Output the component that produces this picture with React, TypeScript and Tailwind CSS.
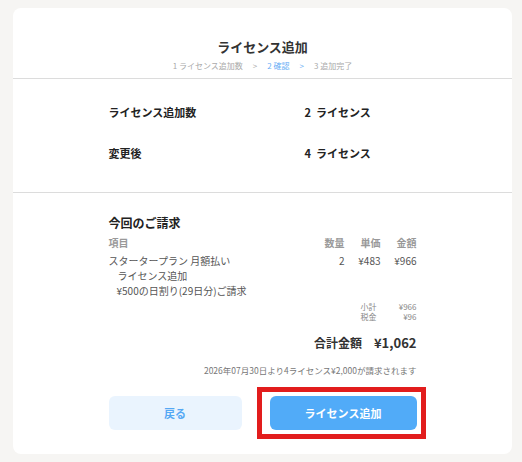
const font = { fontFamily: '"Noto Sans CJK JP", "Noto Sans", sans-serif' };

const lineItems = [
  { label: "スタータープラン 月額払い", qty: "2", unit: "¥483", amount: "¥966" },
];

export default function App() {
  return (
    <div className="min-h-[462px] w-[522px] bg-[#f6f5f3] pt-[8px] pb-[8px] pl-[13px] pr-[10px]" style={font}>
      <div className="rounded-[8px] bg-white pb-[24px]">
        {/* Header */}
        <div className="flex flex-col items-center pt-[30px] pb-[6px] border-b border-[#dcdcdc]">
          <h1 className="text-[13px] leading-[18px] font-bold text-[#333]">ライセンス追加</h1>
          <div className="mt-[4px] flex items-center text-[8px] leading-[12px] text-[#aaa]">
            <span>1 ライセンス追加数</span>
            <span className="mx-[10px]">&gt;</span>
            <span className="text-[#6aaef5]">2 確認</span>
            <span className="mx-[10px] text-[#6aaef5]">&gt;</span>
            <span>3 追加完了</span>
          </div>
        </div>

        {/* Summary */}
        <div className="border-b border-[#dcdcdc] pt-[25px] pb-[31px]">
          <div className="mx-auto w-[308px] grid grid-cols-[196px_1fr] gap-y-[25px] text-[11px] leading-[16px] font-bold text-[#222]">
            <div>ライセンス追加数</div>
            <div>2&nbsp;&nbsp;ライセンス</div>
            <div>変更後</div>
            <div>4&nbsp;&nbsp;ライセンス</div>
          </div>
        </div>

        {/* Billing */}
        <div className="mx-auto w-[308px] pt-[22px]">
          <h2 className="text-[12px] leading-[16px] font-bold text-[#222]">今回のご請求</h2>
          <div className="mt-[5px] flex text-[10px] leading-[14px] font-bold text-[#999]">
            <div className="flex-1">項目</div>
            <div className="w-[36px] text-right">数量</div>
            <div className="w-[36px] text-right">単価</div>
            <div className="w-[36px] text-right">金額</div>
          </div>
          {lineItems.map((item) => (
            <div key={item.label} className="mt-[3px] flex text-[10px] leading-[15px] text-[#555]">
              <div className="flex-1">
                <div>{item.label}</div>
                <div className="pl-[9px]">ライセンス追加</div>
                <div className="pl-[8px]">¥500の日割り(29日分)ご請求</div>
              </div>
              <div className="w-[36px] text-right">{item.qty}</div>
              <div className="w-[36px] text-right">{item.unit}</div>
              <div className="w-[36px] text-right">{item.amount}</div>
            </div>
          ))}
          <div className="mt-[4px] flex flex-col items-end text-[8px] leading-[10px] text-[#888]">
            <div className="flex">
              <span>小計</span>
              <span className="w-[40px] text-right">¥966</span>
            </div>
            <div className="flex">
              <span>税金</span>
              <span className="w-[40px] text-right">¥96</span>
            </div>
          </div>
          <div className="mt-[12px] flex justify-end items-baseline gap-[12px] text-[12px] leading-[18px] font-bold text-[#333]">
            <span>合計金額</span>
            <span className="text-[13px]">¥1,062</span>
          </div>
          <div className="mt-[12px] text-right text-[8.5px] leading-[12px] text-[#777]">
            2026年07月30日より4ライセンス¥2,000が請求されます
          </div>

          {/* Actions */}
          <div className="mt-[20px] flex justify-between">
            <button className="h-[34px] w-[133px] rounded-[6px] bg-[#eaf4fe] text-[11px] font-bold text-[#55a8f4]">
              戻る
            </button>
            <div className="relative">
              <button className="h-[34px] w-[147px] rounded-[6px] bg-[#51abf8] text-[11px] font-bold text-white">
                ライセンス追加
              </button>
              <div className="pointer-events-none absolute -left-[13px] -right-[9px] -top-[9px] -bottom-[9px] border-[5px] border-[#e21d1d]" />
            </div>
          </div>
        </div>
      </div>
    </div>
  );
}
